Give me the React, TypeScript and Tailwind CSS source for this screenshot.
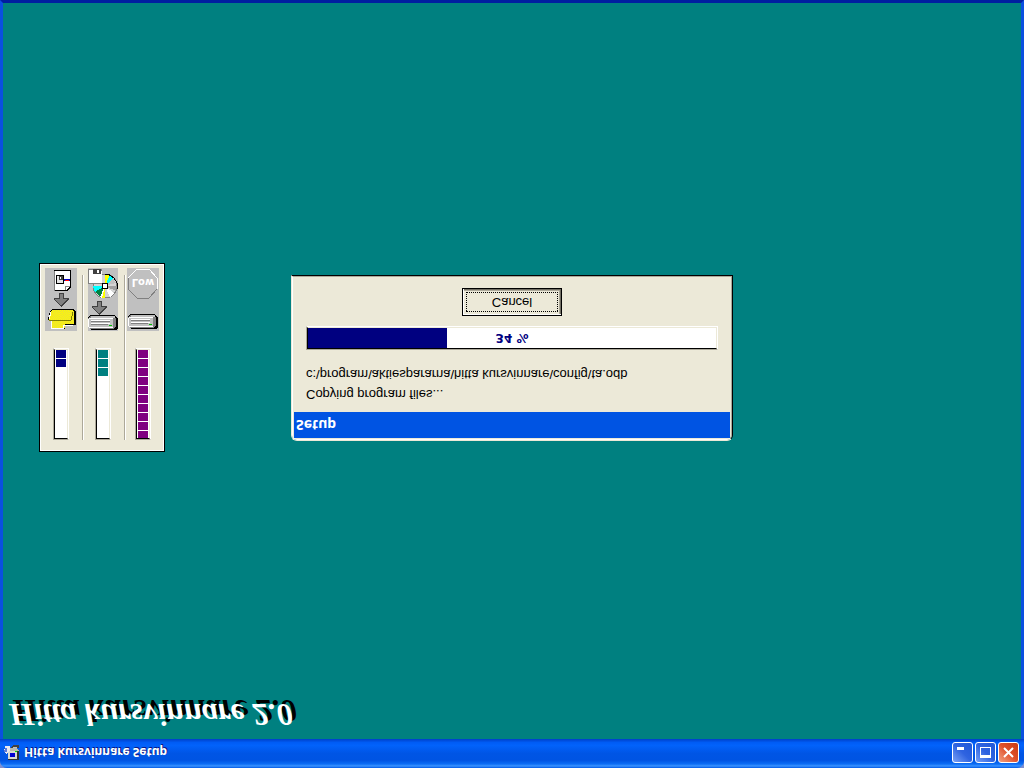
type GaugeProps = {
  label: string;
  filled: number;
  color: string;
};

const SEGMENTS = 10;

const gauges = [
  { label: 'File', filled: 2, color: 'bg-[#000080]', width: 'w-[41px] pr-px', Icon: FileToFolderIcon },
  { label: 'Disk', filled: 3, color: 'bg-[#008080]', width: 'w-10 pr-0.5', Icon: DiscToDriveIcon },
  { label: 'Space', filled: 10, color: 'bg-[#800080]', width: 'w-[37px] pr-[3px]', Icon: LowSpaceIcon },
];

function Gauge({ label, filled, color }: GaugeProps) {
  return (
    <div
      role="meter"
      aria-label={label}
      aria-valuemin={0}
      aria-valuemax={SEGMENTS}
      aria-valuenow={filled}
      className="h-[92px] w-4 border border-t-[#aca899] border-l-[#aca899] border-r-white border-b-white"
    >
      <div className="flex h-full flex-col-reverse items-center gap-px overflow-hidden border border-t-black border-l-black border-r-[#ece9d8] border-b-[#ece9d8] bg-white">
        {Array.from({ length: filled }, (_, i) => (
          <div key={i} className={`h-2 w-[10px] shrink-0 ${color}`} />
        ))}
      </div>
    </div>
  );
}

function Drive() {
  return (
    <g>
      <path d="M3 0 H28 L30 2 V11 L27 15 H2 L0 12 V3 Z" fill="#000" />
      <path d="M2 1 H25 L28 4 V11 L26 14 H2 L0 12 V3 Z" fill="#808080" />
      <path d="M1 3 H25 V12 H1 Z" fill="#c0c0c0" />
      <path d="M3 12 H26 L27 13 V14 H3 Z" fill="#c0c0c0" />
      <path d="M0 3 H1 V11 H25 V12 H1 L0 11 Z" fill="#fff" />
      <path d="M1 2 H25 V3 H1 Z" fill="#fff" />
      <path d="M3 9 H22 V10 H3 Z M3 6 H22 V7 H3 Z" fill="#fff" />
      <path d="M3 8 H22 V9 H3 Z M3 5 H20 V6 H3 Z" fill="#808080" />
      <path d="M21 4 H24 V5 H21 Z" fill="#00c000" />
    </g>
  );
}

function FileToFolderIcon() {
  return (
    <svg width="32" height="63" viewBox="0 0 32 63" shapeRendering="crispEdges">
      <defs>
        <pattern id="dither" width="2" height="2" patternUnits="userSpaceOnUse">
          <rect width="2" height="2" fill="#ffff00" />
          <path d="M0 0 H1 V1 H0 Z M1 1 H2 V2 H1 Z" fill="#e8d840" />
        </pattern>
      </defs>
      <rect width="32" height="63" fill="#c0c0c0" />
      <path d="M9 40 H22 L26 44 V61 H9 Z" fill="#000" />
      <path d="M9 41 H21 L25 45 V60 H10 Z" fill="#fff" />
      <path d="M9 40 H10 V60 H9 Z M20 41 H21 V44 H25 V45 H20 Z" fill="#808080" />
      <path d="M11 47 H19 V56 H11 Z" fill="#000" />
      <path d="M12 48 H18 V55 H12 Z" fill="#e8e8e8" />
      <path d="M14 51 H18 V55 H14 Z" fill="#404040" />
      <path d="M15 52 H16 V54 H15 Z" fill="#fff" />
      <path d="M19 50 H25 V52 H19 Z" fill="#0000c0" />
      <path d="M20 50 H24 V51 H20 Z" fill="#ff0000" />
      <path d="M14 38 V33 H9 V32 L16 24 H17 L24 32 V33 H19 V38 Z" fill="#404040" />
      <path d="M15 37 V32 H10 L16 25 L22 32 H18 V37 Z" fill="#808080" />
      <path d="M7 22 H29 L31 19 V6 H20 V2 H7 L6 10 H4 L3 12 L5 20 Z" fill="#000" />
      <path d="M7 21 H28 L29 19 V7 H20 V3 H7 L6 9 Z" fill="url(#dither)" />
      <path d="M4 11 H26 L28 19 L26 20 H6 Z" fill="url(#dither)" />
      <path d="M4 11 H26 L28 19" fill="none" stroke="#808000" />
      <path d="M6 10 V3 H18 V6 H28" fill="none" stroke="#fff" />
      <path d="M4 12 L6 19" fill="none" stroke="#fff" />
    </svg>
  );
}

function DiscToDriveIcon() {
  return (
    <svg width="30" height="63" viewBox="0 0 30 63" shapeRendering="crispEdges">
      <rect width="30" height="63" fill="#c0c0c0" />
      <circle cx="17" cy="45" r="12" fill="#d4d4d4" stroke="#808080" />
      <path d="M17 45 L17 57 L22 56 Z" fill="#ffff00" />
      <path d="M17 45 L22 56 L25 53 Z" fill="#00ffff" />
      <path d="M17 45 L25 53 L28 48 Z" fill="#c0c0c0" />
      <path d="M17 45 L5 45 L7 39 Z" fill="#00ffff" />
      <path d="M17 45 L7 39 L12 34 Z" fill="#008040" />
      <path d="M17 45 L12 34 L14 33 Z" fill="#fff" />
      <path d="M17 45 L14 33 L17 33 Z" fill="#ffff00" />
      <path d="M17 45 L22 34 L26 38 Z" fill="#fff" />
      <path d="M17 45 L28 40 L29 45 Z" fill="#a0a0a0" />
      <path d="M17 57 H20 L26 53 L29 48 V42" fill="none" stroke="#000" />
      <path d="M14 42 H20 V48 H14 Z" fill="#000" />
      <path d="M15 43 H19 V47 H15 Z" fill="#fff" />
      <path d="M0 62 V47 H14 V61 L13 62 Z" fill="#808080" />
      <path d="M1 61 V48 H14 V60 Z" fill="#fff" />
      <path d="M5 57 H13 V62 H5 Z" fill="#404040" />
      <path d="M9 58 H11 V61 H9 Z" fill="#fff" />
      <path d="M9 30 V25 H4 V24 L11 16 H12 L19 24 V25 H14 V30 Z" fill="#404040" />
      <path d="M10 29 V24 H5 L11 17 L17 24 H13 V29 Z" fill="#808080" />
      <g transform="translate(0 1)">
        <Drive />
      </g>
    </svg>
  );
}

function LowSpaceIcon() {
  return (
    <svg width="32" height="63" viewBox="0 0 32 63" shapeRendering="crispEdges">
      <rect width="32" height="63" fill="#c0c0c0" />
      <path d="M10 62 L1 53 V42 L10 33 H22 L30 42 V53 L22 62 Z" fill="#c0c0c0" stroke="#808080" />
      <path d="M1 53 L10 62 H22 L30 53 V42" fill="none" stroke="#fff" />
      <text
        x="16"
        y="52"
        textAnchor="middle"
        fill="#fff"
        className="font-['DejaVu_Sans',sans-serif] text-[10px] font-bold"
      >
        Low
      </text>
      <g transform="translate(1 2)">
        <Drive />
      </g>
    </svg>
  );
}

function InstallerIcon() {
  return (
    <svg width="16" height="16" viewBox="0 0 16 16" shapeRendering="crispEdges">
      <path d="M4 0 H15 V9 H4 Z" fill="#303030" />
      <path d="M4 1 H13 V9 H4 Z" fill="#d8d8d0" />
      <rect x="6" y="3" width="5" height="4" fill="#0000d0" />
      <path d="M4 9 H15 L13 12 H5 Z" fill="#b8b8b0" />
      <rect x="11" y="8" width="2" height="1" fill="#00e000" />
      <path d="M0 8 L2 6 L6 9 V14 H1 Z" fill="#e8e8f0" />
      <path d="M0 8 H3 V12 H1 Z" fill="#5878d8" />
      <path d="M7 12 H15 V15 H9 Z" fill="#404040" />
      <path d="M9 13 H13" stroke="#c0c0c0" />
    </svg>
  );
}

function TitleBar() {
  const button =
    'flex size-[21px] items-center justify-center rounded-[3px] border border-white bg-linear-to-br';
  return (
    <header className="flex h-[29px] items-center gap-1 rounded-t-[7px] bg-[linear-gradient(#0058e6_0%,#3a93ff_7%,#0a6cf5_14%,#0054e3_26%,#0055e5_50%,#0262fb_78%,#005cf5_88%,#0040c8_100%)] pt-0.5 pr-[5px] pl-1">
      <InstallerIcon />
      <h1 className="flex-1 font-['Noto_Sans','Liberation_Sans',sans-serif] text-[12px] leading-4 font-bold text-white [text-shadow:1px_1px_0_#0a1883]">
        Hitta kursvinnare Setup
      </h1>
      <div className="flex gap-0.5">
        <button aria-label="Minimize" className={`${button} from-[#7aa0f5] via-[#2f63e0] to-[#2058d8]`}>
          <svg width="13" height="13" viewBox="0 0 13 13">
            <rect x="1" y="9" width="7" height="3" fill="#fff" />
          </svg>
        </button>
        <button aria-label="Maximize" className={`${button} from-[#7aa0f5] via-[#2f63e0] to-[#2058d8]`}>
          <svg width="13" height="13" viewBox="0 0 13 13">
            <path d="M1 1 H12 V12 H1 Z M2 4 V11 H11 V4 Z" fill="#fff" fillRule="evenodd" />
          </svg>
        </button>
        <button aria-label="Close" className={`${button} from-[#f0a080] via-[#e0512a] to-[#c83a10]`}>
          <svg width="13" height="13" viewBox="0 0 13 13">
            <path d="M2 2 L11 11 M11 2 L2 11" stroke="#fff" strokeWidth="2" />
          </svg>
        </button>
      </div>
    </header>
  );
}

function GaugePanel() {
  return (
    <section aria-label="Status" className="absolute top-[287px] left-9 border border-black bg-[#ece9d8]">
      <div className="flex border border-white pt-[10px] pb-[3px]">
        {gauges.map(({ label, filled, color, width, Icon }, index) => (
          <div key={label} className="flex">
            {index > 0 && <div className="mb-[7px] w-0.5 border-r border-l border-r-white border-l-[#aca899]" />}
            <div className={`flex flex-col items-center gap-[17px] ${width}`}>
              <Gauge label={label} filled={filled} color={color} />
              <Icon />
            </div>
          </div>
        ))}
      </div>
    </section>
  );
}

function SetupDialog() {
  const percent = 34;
  return (
    <section
      role="dialog"
      aria-labelledby="setup-title"
      className="absolute top-[298px] left-1/2 w-[442px] -translate-x-1/2 rounded-t-md border border-t-[#ece9d8] border-l-[#ece9d8] border-r-black border-b-black"
    >
      <div className="rounded-t-[5px] border border-t-white border-l-white border-r-[#aca899] border-b-[#aca899] bg-[#ece9d8] p-px">
        <h2
          id="setup-title"
          className="h-[26px] bg-[#0054e3] px-[2px] font-['Noto_Sans','Liberation_Sans',sans-serif] text-[14px] leading-[26px] font-bold text-white"
        >
          Setup
        </h2>
        <div className="flex flex-col px-3 pt-2 pb-[10px]">
          <p>Copying program files...</p>
          <p>c:\program\aktiespararna\hitta kursvinnare\config\ta.odb</p>
          <div
            role="progressbar"
            aria-label="Copy progress"
            aria-valuenow={percent}
            className="mt-[14px] h-6 border border-t-[#aca899] border-l-[#aca899] border-r-white border-b-white"
          >
            <div className="grid h-full border border-t-black border-l-black border-r-[#ece9d8] border-b-[#ece9d8] bg-white">
              <div className="col-start-1 row-start-1 bg-[#000080]" style={{ width: `${percent}%` }} />
              <span className="col-start-1 row-start-1 text-center font-['DejaVu_Sans',sans-serif] text-[12px] font-bold text-[#000080]">
                {percent} %
              </span>
            </div>
          </div>
          <button className="mt-[10px] h-7 w-[100px] self-center border border-black bg-[#ece9d8] shadow-[inset_1px_1px_0_#fff,inset_-1px_-1px_0_#716f64,inset_-2px_-2px_0_#aca899]">
            <span className="m-[3px] block border border-dotted border-black leading-[18px]">Cancel</span>
          </button>
        </div>
      </div>
    </section>
  );
}

export default function App() {
  return (
    <div className="flex min-h-screen -scale-y-100 flex-col bg-[#7f8fd0] font-['Liberation_Sans',Arial,sans-serif] text-[13px] leading-5 text-black">
      <TitleBar />
      <main className="relative flex-1 border-x-[3px] border-b-[3px] border-x-[#0a50e0] border-b-[#001ea0] bg-[#008080]">
        <p className="px-1.5 pt-1 font-['Liberation_Serif','Times_New_Roman',serif] text-[32px] leading-10 font-bold text-white italic [text-shadow:4px_4px_0_#000]">
          Hitta kursvinnare 2.0
        </p>
        <GaugePanel />
        <SetupDialog />
      </main>
    </div>
  );
}
